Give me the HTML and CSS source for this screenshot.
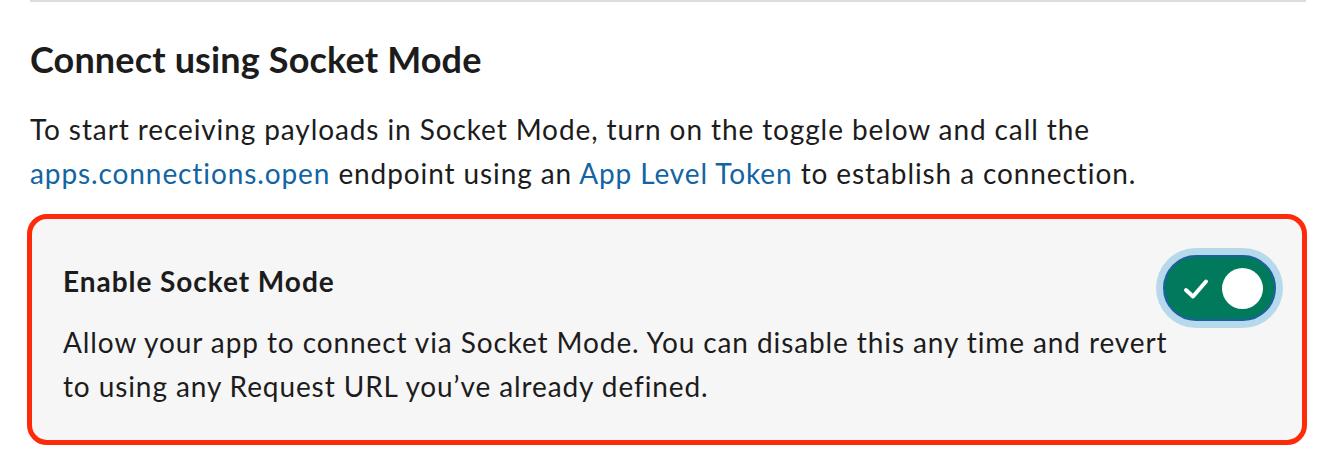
FILE: index.html
```html
<!DOCTYPE html>
<html lang="en">
<head>
    <meta charset="UTF-8">
    <title>Socket Mode</title>
    <link rel="stylesheet" href="styles.css">
</head>
<body>

<div class="pagina">

    <!-- Linha de separação no topo -->
    <div class="separador"></div>

    <h2 class="titulo">Connect using Socket Mode</h2>

    <p class="texto">
        To start receiving payloads in Socket Mode, turn on the toggle below and call the
        <a href="#">apps.connections.open</a> endpoint using an <a href="#">App Level Token</a> to establish a connection.
    </p>

    <!-- Caixa com o toggle -->
    <div class="caixa">
        <div class="caixa-titulo">Enable Socket Mode</div>

        <div class="toggle">
            <svg class="toggle-check" width="26" height="22" viewBox="0 0 26 22">
                <path d="M3 12 L10 18.5 L23 3.5" fill="none" stroke="#fff" stroke-width="4" stroke-linecap="round" stroke-linejoin="round"/>
            </svg>
            <span class="toggle-bola"></span>
        </div>

        <div class="caixa-texto">
            Allow your app to connect via Socket Mode. You can disable this any time and revert
            to using any Request URL you’ve already defined.
        </div>
    </div>

</div>

</body>
</html>
```

FILE: styles.css
```css
/* Estilo geral da página */
body {
    margin: 0;
    padding: 0;
    background-color: #ffffff;
    font-family: Lato, "Open Sans", sans-serif;
    color: #1d1c1d;
}

.pagina {
    padding: 0 34px 0 30px;
}

/* Linha cinza no topo */
.separador {
    height: 2px;
    background-color: #dddddd;
}

.titulo {
    margin: 36px 0 0 0;
    font-size: 36px;
    font-weight: 700;
    line-height: 43px;
    letter-spacing: 0.15px;
}

.texto {
    margin: 26px 0 0 0;
    font-size: 28px;
    line-height: 44px;
    letter-spacing: 0.9px;
}

.texto a {
    color: #1264a3;
    text-decoration: none;
}

/* Caixa do Socket Mode com contorno vermelho */
.caixa {
    margin: 19px -1px 0 -3px;
    border: 5px solid #fe2b0b;
    border-radius: 20px;
    background-color: #f6f6f6;
    padding: 40px 26px 32px 31px;
    display: grid;
    grid-template-columns: 1fr auto;
}

.caixa-titulo {
    grid-column: 1;
    grid-row: 1;
    font-size: 28px;
    font-weight: 700;
    line-height: 44px;
    letter-spacing: 0.95px;
}

.caixa-texto {
    grid-column: 1 / -1;
    grid-row: 2;
    max-width: 1120px;
    margin-top: 17px;
    font-size: 28px;
    line-height: 44px;
    letter-spacing: 0.9px;
}

/* Toggle ligado */
.toggle {
    grid-column: 2;
    grid-row: 1 / span 2;
    align-self: start;
    margin-top: -4px;
    width: 113px;
    height: 66px;
    box-sizing: border-box;
    border: 2px solid #1d5fa4;
    border-radius: 33px;
    background-color: #007a5a;
    box-shadow: 0 0 0 7px #b6daeb;
    padding: 0 11px 0 18px;
    display: flex;
    align-items: center;
    justify-content: space-between;
}

.toggle-check {
    display: block;
    margin-top: 1px;
}

.toggle-bola {
    width: 41px;
    height: 41px;
    border-radius: 50%;
    background-color: #ffffff;
}
```
